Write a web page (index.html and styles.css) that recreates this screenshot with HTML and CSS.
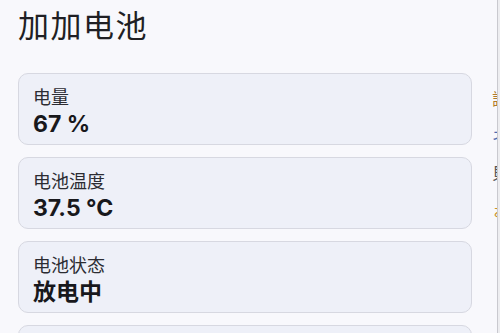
FILE: index.html
```html
<!DOCTYPE html>
<html lang="zh">
<head>
<meta charset="utf-8">
<link rel="stylesheet" href="styles.css">
</head>
<body>
<div class="screen">
  <main class="main">
    <h1 class="title">加加电池</h1>
    <div class="cards">
      <div class="card"><div class="label">电量</div><div class="value">67 %</div></div>
      <div class="card"><div class="label">电池温度</div><div class="value">37.5 °C</div></div>
      <div class="card"><div class="label">电池状态</div><div class="value">放电中</div></div>
      <div class="card"></div>
    </div>
  </main>
  <aside class="edge">
    <div class="peek">
      <span class="p1">譲</span>
      <span class="p2">ネ</span>
      <span class="p3">貝</span>
      <span class="p4">ぉ</span>
    </div>
    <div class="rule"></div>
    <div class="gutter"></div>
  </aside>
</div>
</body>
</html>
```

FILE: styles.css
```css
html, body {
  margin: 0;
  padding: 0;
  background: #f8f8fc;
  overflow: hidden;
}
.screen {
  display: flex;
  width: 500px;
  height: 333px;
  overflow: hidden;
}
.main {
  flex: 1;
  padding: 4px 20px 0 18px;
  font-family: Inter, "Noto Sans CJK SC", sans-serif;
}
.title {
  margin: 0;
  font-family: "Noto Sans CJK SC", sans-serif;
  font-size: 31px;
  font-weight: 400;
  line-height: 40px;
  letter-spacing: 1.5px;
  color: #1f1f24;
}
.cards {
  margin-top: 29px;
  display: flex;
  flex-direction: column;
  gap: 12px;
}
.card {
  box-sizing: border-box;
  height: 72px;
  padding: 10px 14px 0 14px;
  background: #eef0f8;
  border: 1px solid #d7d8e1;
  border-radius: 10px;
}
.label {
  font-family: "Noto Sans CJK SC", sans-serif;
  font-size: 18px;
  line-height: 24px;
  color: #2c2c32;
}
.value {
  margin-top: 2px;
  font-size: 23px;
  font-weight: 700;
  line-height: 28px;
  color: #18181c;
  font-family: Inter, "Noto Sans CJK SC", sans-serif;
}
.edge {
  display: flex;
  width: 8px;
  flex: none;
}
.peek {
  width: 5px;
  overflow: hidden;
  display: flex;
  flex-direction: column;
  padding-top: 80px;
  font-family: "Noto Sans CJK SC", sans-serif;
  font-size: 16px;
  line-height: 37px;
}
.peek span { display: block; }
.p1 { color: #b07a2a; }
.p2 { color: #4a6ab0; }
.p3 { color: #555; }
.p4 { color: #c8922a; }
.rule {
  width: 1px;
  background: #c9c9cf;
}
.gutter {
  width: 2px;
  background: #ededf0;
}
```
